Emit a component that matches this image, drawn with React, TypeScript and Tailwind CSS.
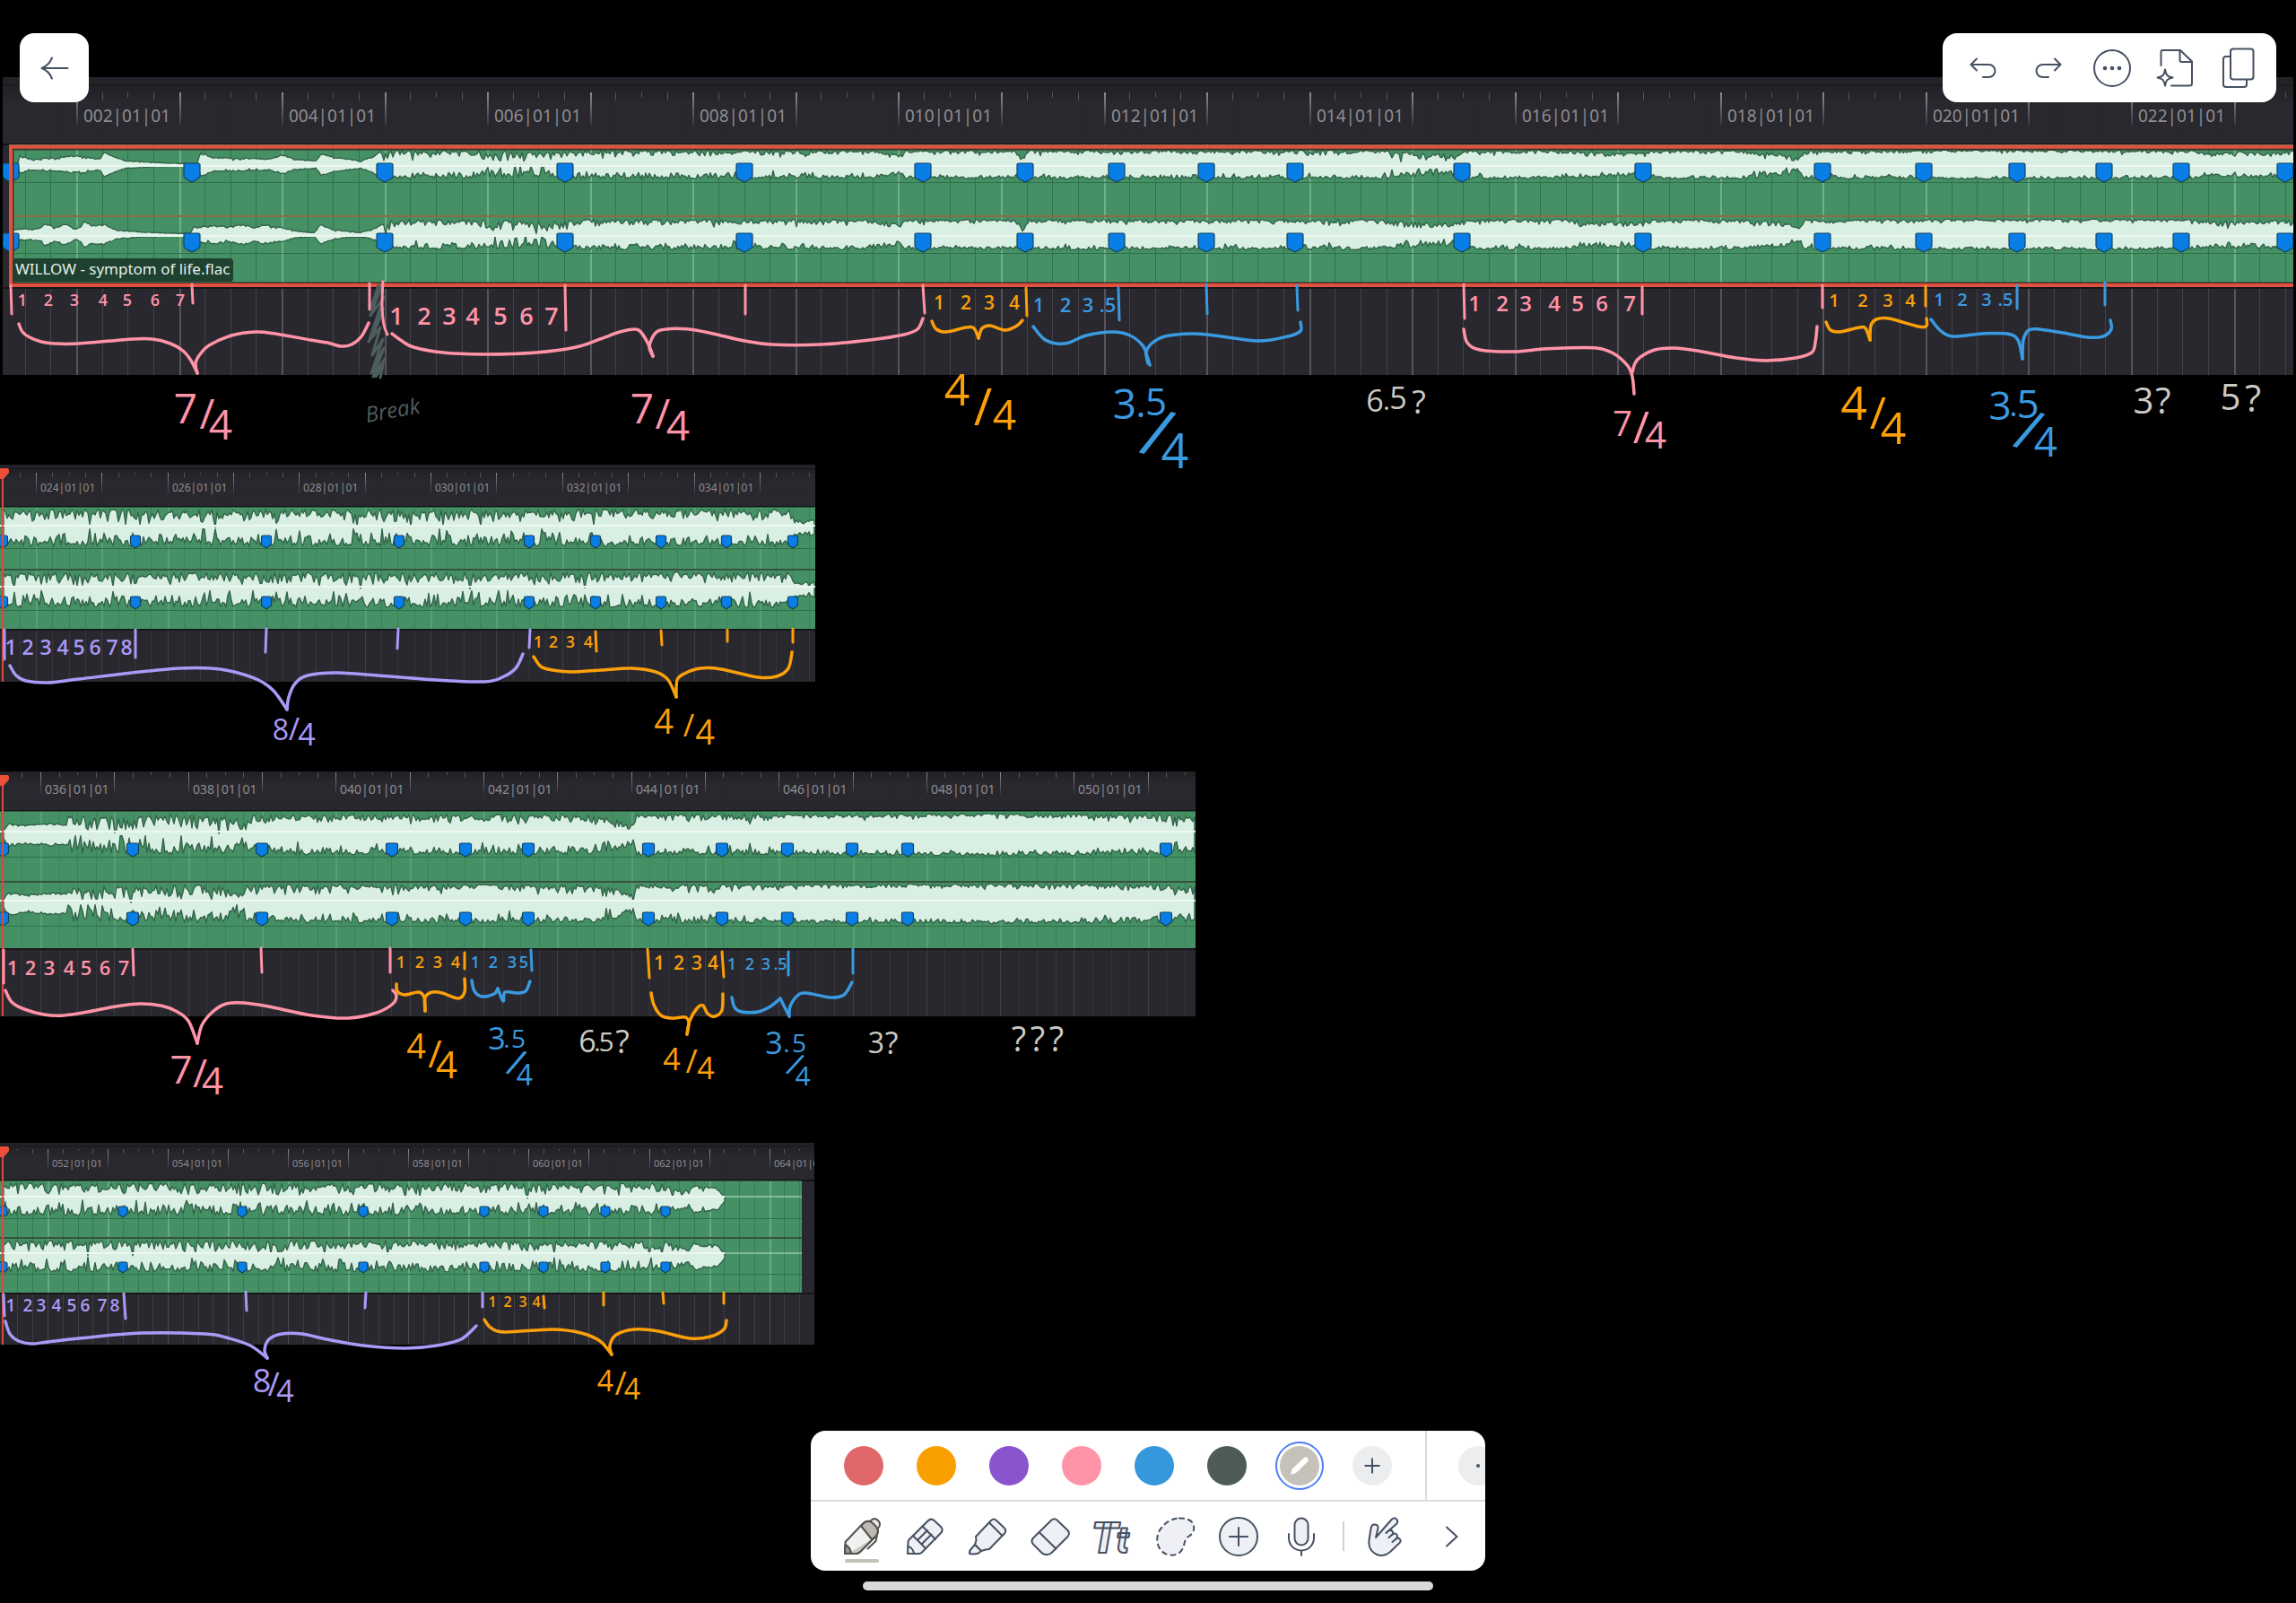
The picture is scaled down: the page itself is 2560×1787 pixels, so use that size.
import React from "react";

type Pt = [number, number];
type Key = [number, number, number];

interface Channel {
  top: number;
  bottom: number;
  axis: number;
  rule: number;
  markerY: number;
}

interface StripData {
  id: string;
  left: number;
  firstBar: number;
  firstX: number;
  barWidth: number;
  bars: number;
  labelSize: number;
  labelDx: number;
  labelY: number;
  tickTop: number;
  majorLen: number;
  minorLen: number;
  rulerHeight: number;
  clipHeight: number;
  laneHeight: number;
  clipEnd: number;
  waveEnd: number;
  split: number;
  splitColor: string;
  channels: Channel[];
  markers: number[];
  markerW: number;
  markerH: number;
  keys: Key[][];
  seed: number;
  gridAlpha: number;
}

function random(seed: number) {
  let s = seed;
  return () => {
    s = (s * 1664525 + 1013904223) % 4294967296;
    return s / 4294967296;
  };
}

function levelAt(keys: Key[], x: number): [number, number] {
  for (let i = 1; i < keys.length; i++) {
    if (x <= keys[i][0]) {
      const a = keys[i - 1];
      const b = keys[i];
      const t = Math.max(0, (x - a[0]) / (b[0] - a[0]));
      return [a[1] + (b[1] - a[1]) * t, a[2] + (b[2] - a[2]) * t];
    }
  }
  const last = keys[keys.length - 1];
  return [last[1], last[2]];
}

function wavePath(keys: Key[], ch: Channel, end: number, seed: number) {
  const rnd = random(seed);
  const half = (ch.bottom - ch.top) / 2;
  const upper: string[] = [];
  const lower: string[] = [];
  for (let x = keys[0][0]; x <= end; x += 2) {
    const [base, jitter] = levelAt(keys, x);
    const common = Math.pow(rnd(), 3);
    const a = Math.min(0.95, base + jitter * (common * 0.5 + Math.pow(rnd(), 2.5) * 0.65));
    const b = Math.min(0.95, base + jitter * (common * 0.5 + Math.pow(rnd(), 2.5) * 0.75));
    upper.push(`${x} ${(ch.top + a * half).toFixed(1)}`);
    lower.push(`${x} ${(ch.bottom - b * half).toFixed(1)}`);
  }
  return `M${upper.join("L")}L${lower.reverse().join("L")}Z`;
}

function smooth(points: Pt[]) {
  let d = `M${points[0][0]} ${points[0][1]}`;
  for (let i = 0; i < points.length - 1; i++) {
    const p0 = points[Math.max(0, i - 1)];
    const p1 = points[i];
    const p2 = points[i + 1];
    const p3 = points[Math.min(points.length - 1, i + 2)];
    const c1 = [p1[0] + (p2[0] - p0[0]) / 6, p1[1] + (p2[1] - p0[1]) / 6];
    const c2 = [p2[0] - (p3[0] - p1[0]) / 6, p2[1] - (p3[1] - p1[1]) / 6];
    d += `C${c1[0].toFixed(1)} ${c1[1].toFixed(1)} ${c2[0].toFixed(1)} ${c2[1].toFixed(1)} ${p2[0]} ${p2[1]}`;
  }
  return d;
}

const LOUD_A: Key[] = [
  [430, 0.1, 0.9], [442, 0.05, 0.6], [540, 0.05, 0.6], [550, 0.1, 1], [630, 0.15, 1], [640, 0.03, 0.6],
  [860, 0.03, 0.5], [970, 0.03, 0.4], [1003, 0.32, 0.4], [1010, 0.03, 0.35], [1132, 0.04, 0.3], [1141, 0.6, 0.4],
  [1146, 0.02, 0.35], [1540, 0.02, 0.4], [1555, 0.1, 0.7], [1618, 0.3, 0.6], [1632, 0.02, 0.4], [1740, 0.02, 0.3],
  [1760, 0.08, 0.5], [1828, 0.22, 0.4], [1845, 0.02, 0.3], [1940, 0.02, 0.3], [1965, 0.12, 0.5], [1990, 0.2, 0.5],
  [2005, 0.6, 0.3], [2012, 0.02, 0.35], [2100, 0.02, 0.35], [2180, 0, 0.22], [2440, 0.02, 0.3], [2470, 0.15, 0.4], [2560, 0.05, 0.5],
];

const STRIPS: StripData[] = [
  {
    id: "a", left: 3, firstBar: 2, firstX: 85, barWidth: 114.55, bars: 22,
    labelSize: 19, labelDx: 8, labelY: 41, tickTop: 8, majorLen: 37, minorLen: 9,
    rulerHeight: 65, clipHeight: 159, laneHeight: 98, clipEnd: 2560, waveEnd: 2560,
    split: 79, splitColor: "#8a6a49",
    channels: [
      { top: 6, bottom: 39, axis: 23, rule: 42, markerY: 21 },
      { top: 83, bottom: 118, axis: 101, rule: 121, markerY: 99 },
    ],
    markers: [12, 214, 429, 630, 830, 1029, 1143, 1245, 1345, 1444, 1630, 1832, 2032, 2145, 2249, 2346, 2432, 2548],
    markerW: 18, markerH: 21, seed: 7, gridAlpha: 1,
    keys: [
      [
        [14, 0.93, 0], [20, 0.93, 0], [22, 0.35, 0.2], [35, 0.6, 0.2], [60, 0.5, 0.2], [95, 0.32, 0.25], [105, 0.6, 0.1],
        [113, 0.6, 0], [115, 0.15, 0], [125, 0.4, 0.1], [140, 0.72, 0.08], [180, 0.86, 0.05], [212, 0.94, 0], [220, 0.9, 0],
        [223, 0.15, 0.2], [238, 0.52, 0.1], [262, 0.5, 0.25], [300, 0.62, 0.1], [315, 0.28, 0.15], [327, 0.6, 0.1],
        [352, 0.75, 0.05], [358, 0.25, 0.1], [372, 0.48, 0.1], [402, 0.72, 0.1], [414, 0.5, 0.1], [424, 0.1, 0.1],
        ...LOUD_A,
      ],
      [
        [14, 0.7, 0.1], [27, 0.6, 0.15], [45, 0.6, 0.1], [50, 0.25, 0.1], [60, 0.5, 0.15], [66, 0.5, 0.1], [71, 0.28, 0.1],
        [84, 0.6, 0.1], [90, 0.5, 0.1], [94, 0.15, 0.1], [102, 0.4, 0.1], [116, 0.32, 0.15], [130, 0.7, 0.08], [165, 0.85, 0.05],
        [200, 0.93, 0], [212, 0.93, 0], [216, 0.5, 0.15], [240, 0.38, 0.2], [255, 0.5, 0.15], [272, 0.28, 0.15], [284, 0.55, 0.1],
        [294, 0.35, 0.2], [312, 0.5, 0.15], [330, 0.76, 0.08], [350, 0.86, 0.05], [357, 0.35, 0.1], [372, 0.68, 0.1],
        [400, 0.86, 0.05], [414, 0.7, 0.1], [425, 0.3, 0.2],
        ...LOUD_A,
      ],
    ],
  },
  {
    id: "b", left: 0, firstBar: 24, firstX: 40, barWidth: 73.35, bars: 12,
    labelSize: 12, labelDx: 5, labelY: 25, tickTop: 4, majorLen: 23, minorLen: 5,
    rulerHeight: 41, clipHeight: 136, laneHeight: 59, clipEnd: 909, waveEnd: 909,
    split: 69, splitColor: "#35523f",
    channels: [
      { top: 2, bottom: 45, axis: 20, rule: 46, markerY: 32 },
      { top: 72, bottom: 113, axis: 88, rule: 115, markerY: 100 },
    ],
    markers: [3, 151, 297, 445, 590, 664, 737, 810, 884],
    markerW: 11, markerH: 14, seed: 21, gridAlpha: 0.5,
    keys: [[[4, 0.05, 0.9], [400, 0.05, 0.85], [560, 0.04, 0.9], [660, 0.06, 0.9], [700, 0.03, 0.6], [860, 0.04, 0.7], [880, 0.05, 0.6], [886, 0.6, 0.2], [909, 0.55, 0.25]]],
  },
  {
    id: "c", left: 0, firstBar: 36, firstX: 45, barWidth: 82.32, bars: 16,
    labelSize: 14, labelDx: 5, labelY: 25, tickTop: 1, majorLen: 24, minorLen: 6,
    rulerHeight: 43, clipHeight: 153, laneHeight: 76, clipEnd: 1333, waveEnd: 1333,
    split: 78, splitColor: "#35523f",
    channels: [
      { top: 3, bottom: 50, axis: 22, rule: 51, markerY: 36 },
      { top: 81, bottom: 126, axis: 99, rule: 128, markerY: 113 },
    ],
    markers: [3, 148, 292, 437, 519, 589, 723, 805, 878, 950, 1012, 1300],
    markerW: 13, markerH: 15, seed: 33, gridAlpha: 0.5,
    keys: [[[4, 0.8, 0.1], [9, 0.4, 0.2], [28, 0.55, 0.1], [60, 0.45, 0.15], [74, 0.5, 0.1], [76, 0.1, 1], [145, 0.15, 1], [190, 0.05, 0.9], [264, 0.08, 0.9], [270, 0.6, 0.3], [275, 0.1, 0.7], [300, 0.04, 0.5], [620, 0.04, 0.5], [660, 0.05, 0.5], [680, 0.2, 0.6], [706, 0.5, 0.4], [710, 0.03, 0.4], [860, 0.02, 0.5], [900, 0.02, 0.3], [1100, 0, 0.25], [1270, 0.02, 0.4], [1333, 0.12, 0.7]]],
  },
  {
    id: "d", left: 0, firstBar: 52, firstX: 53, barWidth: 67.05, bars: 13,
    labelSize: 11, labelDx: 5, labelY: 23, tickTop: 3, majorLen: 22, minorLen: 5,
    rulerHeight: 37, clipHeight: 125, laneHeight: 58, clipEnd: 894, waveEnd: 808,
    split: 63, splitColor: "#35523f",
    channels: [
      { top: 2, bottom: 40, axis: 17, rule: 42, markerY: 29 },
      { top: 66, bottom: 103, axis: 80, rule: 104, markerY: 91 },
    ],
    markers: [3, 137, 270, 405, 540, 606, 675, 742],
    markerW: 10, markerH: 12, seed: 58, gridAlpha: 0.8,
    keys: [[[4, 0.05, 0.8], [300, 0.05, 0.85], [570, 0.05, 0.7], [590, 0.1, 0.9], [640, 0.05, 0.7], [740, 0.08, 0.8], [768, 0.5, 0.3], [774, 0.15, 0.2], [785, 0.25, 0.3], [800, 0.3, 0.2], [808, 0.9, 0]]],
  },
];

function beats(s: StripData) {
  const out: { x: number; beat: number }[] = [];
  for (let i = -4; i < s.bars * 4 + 4; i++) {
    const x = s.firstX + (i * s.barWidth) / 4;
    if (x > s.left + 8) out.push({ x: Math.round(x), beat: ((i % 4) + 4) % 4 });
  }
  return out;
}

function Ruler({ s }: { s: StripData }) {
  const fade = `fade-${s.id}`;
  return (
    <svg className="block w-full" height={s.rulerHeight} aria-label="Bar ruler">
      <defs>
        <linearGradient id={fade} x1="0" x2="0" y1="0" y2="1">
          <stop offset="0" stopColor="#8c8b90" />
          <stop offset="1" stopColor="#8c8b90" stopOpacity="0.15" />
        </linearGradient>
      </defs>
      <g transform={`translate(${-s.left} 0)`}>
        {beats(s).map(({ x, beat }) => (
          <rect
            key={x}
            x={x}
            y={s.tickTop}
            width={beat === 0 && s.id === "a" ? 2 : 1}
            height={beat === 0 ? s.majorLen : beat === 2 ? s.minorLen - 3 : s.minorLen}
            fill={beat === 0 ? `url(#${fade})` : "#55545a"}
          />
        ))}
        {Array.from({ length: Math.ceil(s.bars / 2) }, (_, i) => (
          <text
            key={i}
            x={Math.round(s.firstX + i * 2 * s.barWidth) + s.labelDx}
            y={s.labelY}
            fontSize={s.labelSize}
            fill="#8e8d91"
          >
            {`${String(s.firstBar + i * 2).padStart(3, "0")}|01|01`}
          </text>
        ))}
      </g>
    </svg>
  );
}

function Clip({ s }: { s: StripData }) {
  const selected = s.id === "a";
  const start = selected ? 10 : 0;
  const w = s.markerW;
  const h = s.markerH;
  const waves = s.channels.map((ch, i) => wavePath(s.keys[i] ?? s.keys[0], ch, s.waveEnd, s.seed + i * 91));
  return (
    <svg className="block w-full" height={s.clipHeight} aria-label="Audio clip waveform">
      <g transform={`translate(${-s.left} 0)`}>
        <rect x={start} width={s.clipEnd - start} height={s.clipHeight} fill="#459165" />
        {beats(s).filter((b) => b.x < s.clipEnd).map(({ x, beat }) => (
          <rect
            key={x}
            x={x}
            width={beat === 0 ? 2 : 1}
            height={s.clipHeight}
            fill={beat === 0 ? "#bfe6cf" : "#1d5637"}
            opacity={(beat === 0 ? 0.36 : 0.5) * s.gridAlpha}
          />
        ))}
        {s.channels.map((ch, i) => (
          <g key={i}>
            <rect x={start} y={ch.rule} width={s.clipEnd - start} height="1" fill="#2f6e4b" />
            {s.waveEnd < s.clipEnd && (
              <rect x={start} y={ch.axis} width={s.clipEnd - start} height="2" fill="#a9d6bb" opacity="0.6" />
            )}
            <path d={waves[i]} fill="#daefe3" stroke="#336349" strokeWidth="1.4" strokeLinejoin="round" />
            <rect x={start} y={ch.axis} width={s.waveEnd - start} height="2" fill="#edf8f1" />
          </g>
        ))}
        <rect x={start} y={s.split} width={s.clipEnd - start} height="2" fill={s.splitColor} />
        {s.channels.map((ch, i) =>
          s.markers.map((m) => (
            <path
              key={`${i}-${m}`}
              transform={`translate(${m - w / 2} ${ch.markerY})`}
              d={`M2 0H${w - 2}Q${w} 0 ${w} 2V${h * 0.68}Q${w} ${h * 0.76} ${w - 2} ${h * 0.82}L${w / 2} ${h}L2 ${h * 0.82}Q0 ${h * 0.76} 0 ${h * 0.68}V2Q0 0 2 0Z`}
              fill="#087ee6"
              stroke="#14435f"
              strokeWidth="1.2"
            />
          )),
        )}
        {selected ? (
          <>
            <path d="M2600 5.5H14.5V154.5H2600" fill="none" stroke="#4a2f2a" strokeWidth="2" />
            <path d="M2600 2.5H12V157H2600" fill="none" stroke="#e2513f" strokeWidth="4" />
          </>
        ) : (
          <rect x="0" width={s.clipEnd} height="1" fill="#2a5d42" />
        )}
      </g>
    </svg>
  );
}

function Lane({ s }: { s: StripData }) {
  return (
    <svg className="block w-full" height={s.laneHeight} aria-hidden="true">
      <g transform={`translate(${-s.left} 0)`}>
        {beats(s).map(({ x, beat }) => (
          <rect
            key={x}
            x={x}
            width={beat === 0 && s.id === "a" ? 2 : 1}
            height={s.laneHeight}
            fill={beat === 0 ? "#55545a" : "#434248"}
            opacity={s.gridAlpha}
          />
        ))}
        <rect x={s.left} width="2600" height="2" fill="#17161a" />
      </g>
    </svg>
  );
}

function Playhead() {
  return (
    <svg className="absolute top-0 left-0 h-full w-3" aria-hidden="true">
      <rect x="2" y="6" width="2" height="400" fill="#d94c3d" />
      <path d="M0 4H8Q10 4 10 6V9L4 16H0Z" fill="#ee4f3b" />
    </svg>
  );
}

function Strip({ s, className, band }: { s: StripData; className: string; band: string }) {
  return (
    <section className={`relative overflow-hidden bg-[#29282e] ${className}`}>
      <div className={`bg-[#232228] ${band}`} />
      <div className="-mb-px border-b-2 border-[#131216] bg-gradient-to-b from-[#212025] to-[#29282e] to-30%">
        <Ruler s={s} />
      </div>
      <div className="relative">
        <Clip s={s} />
        {s.id === "a" && (
          <span className="absolute bottom-[6px] left-[11px] rounded-sm bg-[#1e4130] pr-1 pb-[2px] pl-[3px] text-[17px] leading-6 whitespace-nowrap text-[#e6efe9]">
            WILLOW - symptom of life.flac
          </span>
        )}
      </div>
      <Lane s={s} />
      {s.id !== "a" && <Playhead />}
    </section>
  );
}

const PINK = "#ff93a8";
const ORANGE = "#fb9f0a";
const BLUE = "#3a9ae0";
const PURPLE = "#ab99f7";
const GREY = "#cdcac3";

const STROKES: { color: string; lines: Pt[][]; braces: Pt[][] }[] = [
  {
    color: PINK,
    lines: [
      [[12, 318], [13, 350]], [[214, 317], [215, 338]], [[412, 316], [412, 345]], [[427, 314], [426, 340], [428, 362], [432, 373]],
      [[630, 318], [631, 368]], [[831, 318], [831, 350]], [[1029, 318], [1031, 349]], [[1632, 317], [1633, 355]],
      [[1831, 320], [1831, 350]], [[2032, 318], [2032, 343]],
      [[4, 1059], [4, 1096]], [[148, 1058], [149, 1087]], [[291, 1057], [292, 1084]], [[435, 1057], [435, 1084]],
    ],
    braces: [
      [[21, 361], [25, 370], [33, 376], [46, 381], [60, 383], [88, 383], [148, 378], [170, 378], [190, 383], [204, 391], [213, 402], [220, 416]],
      [[220, 416], [218, 405], [223, 395], [233, 385], [258, 374], [285, 370], [307, 372], [346, 379], [365, 382], [380, 386], [392, 384], [403, 375], [411, 360]],
      [[437, 372], [448, 380], [461, 387], [494, 393], [543, 395], [598, 393], [642, 387], [669, 378], [691, 370], [708, 367], [716, 372], [724, 386], [728, 397]],
      [[728, 397], [724, 386], [731, 371], [743, 367], [768, 367], [795, 372], [830, 380], [860, 384], [915, 384], [970, 379], [1008, 373], [1023, 367], [1029, 355]],
      [[1632, 367], [1636, 382], [1650, 390], [1688, 392], [1720, 389], [1744, 388], [1780, 388], [1799, 394], [1815, 408], [1820, 420], [1822, 439]],
      [[1820, 415], [1823, 405], [1829, 398], [1845, 390], [1867, 388], [1892, 391], [1936, 399], [1969, 402], [2002, 399], [2020, 393], [2024, 382], [2026, 364]],
      [[6, 1104], [13, 1117], [27, 1125], [49, 1131], [71, 1132], [98, 1128], [129, 1122], [156, 1119], [179, 1121], [196, 1127], [210, 1138], [220, 1163]],
      [[220, 1163], [225, 1143], [237, 1128], [252, 1119], [272, 1118], [299, 1122], [348, 1132], [388, 1135], [420, 1129], [438, 1119], [442, 1110], [438, 1104]],
    ],
  },
  {
    color: ORANGE,
    lines: [
      [[1144, 321], [1145, 352]], [[2147, 319], [2147, 341]],
      [[664, 704], [665, 726]], [[737, 703], [738, 719]], [[811, 702], [811, 715]], [[884, 701], [884, 716]],
      [[518, 1062], [518, 1080]], [[722, 1058], [724, 1090]], [[805, 1061], [807, 1089]],
      [[606, 1445], [607, 1458]], [[673, 1441], [673, 1455]], [[739, 1441], [740, 1453]], [[807, 1441], [807, 1453]],
    ],
    braces: [
      [[1039, 358], [1044, 367], [1055, 370], [1077, 365], [1086, 366], [1091, 377]],
      [[1091, 377], [1095, 366], [1104, 363], [1121, 368], [1134, 363], [1140, 357]],
      [[2036, 359], [2041, 368], [2051, 370], [2073, 365], [2080, 366], [2085, 379]],
      [[2085, 379], [2086, 363], [2092, 356], [2106, 355], [2139, 364], [2148, 363], [2148, 355]],
      [[595, 732], [603, 743], [616, 747], [637, 749], [670, 747], [704, 745], [731, 749], [745, 758], [754, 777]],
      [[754, 777], [755, 758], [763, 751], [781, 745], [804, 746], [845, 755], [866, 754], [879, 745], [883, 727]],
      [[442, 1097], [443, 1105], [451, 1109], [467, 1106], [473, 1112], [474, 1127]],
      [[474, 1127], [474, 1112], [482, 1106], [493, 1107], [511, 1113], [518, 1106], [518, 1091]],
      [[726, 1107], [729, 1120], [737, 1132], [749, 1135], [764, 1134], [768, 1140], [766, 1153]],
      [[766, 1153], [769, 1138], [778, 1123], [784, 1121], [789, 1130], [797, 1133], [805, 1126], [806, 1108]],
      [[540, 1471], [547, 1480], [563, 1485], [616, 1482], [648, 1486], [669, 1495], [682, 1510]],
      [[682, 1510], [680, 1500], [687, 1488], [707, 1482], [734, 1484], [769, 1492], [792, 1490], [807, 1482], [810, 1472]],
    ],
  },
  {
    color: BLUE,
    lines: [
      [[1247, 321], [1248, 357]], [[1345, 317], [1346, 350]], [[1446, 318], [1447, 346]], [[2249, 318], [2249, 344]], [[2347, 315], [2347, 340]],
      [[592, 1059], [593, 1082]], [[879, 1061], [879, 1087]], [[951, 1058], [951, 1085]],
    ],
    braces: [
      [[1152, 364], [1164, 378], [1178, 383], [1192, 382], [1211, 374], [1241, 370], [1260, 374], [1274, 385], [1279, 397], [1282, 407]],
      [[1280, 405], [1278, 393], [1284, 383], [1299, 375], [1329, 372], [1354, 374], [1403, 380], [1436, 375], [1450, 369], [1450, 359]],
      [[2153, 356], [2163, 368], [2177, 375], [2210, 372], [2238, 372], [2250, 379], [2255, 400]],
      [[2255, 400], [2256, 379], [2262, 368], [2273, 367], [2300, 371], [2328, 376], [2345, 375], [2354, 367], [2353, 357]],
      [[526, 1093], [529, 1105], [538, 1111], [551, 1108], [555, 1102]],
      [[555, 1102], [561, 1116], [563, 1106], [576, 1107], [586, 1105], [591, 1094]],
      [[816, 1112], [819, 1123], [827, 1128], [845, 1128], [859, 1122], [870, 1113]],
      [[870, 1113], [876, 1125], [880, 1133]],
      [[880, 1133], [881, 1122], [889, 1110], [899, 1107], [926, 1112], [941, 1109], [950, 1095]],
    ],
  },
  {
    color: PURPLE,
    lines: [
      [[5, 702], [5, 735]], [[151, 702], [151, 733]], [[297, 701], [296, 727]], [[444, 701], [443, 723]], [[591, 702], [590, 722]],
      [[4, 1443], [5, 1467]], [[138, 1442], [140, 1470]], [[274, 1440], [275, 1461]], [[408, 1441], [407, 1458]], [[538, 1441], [538, 1457]],
    ],
    braces: [
      [[11, 742], [18, 753], [29, 759], [53, 761], [88, 757], [147, 750], [200, 745], [235, 745], [261, 749], [288, 758], [305, 770], [320, 791]],
      [[320, 791], [322, 777], [329, 762], [343, 753], [376, 750], [434, 754], [487, 758], [540, 760], [560, 755], [575, 745], [583, 729]],
      [[6, 1473], [11, 1487], [21, 1495], [35, 1498], [53, 1496], [88, 1492], [158, 1486], [229, 1487], [252, 1491], [279, 1500], [298, 1514]],
      [[298, 1514], [295, 1505], [300, 1493], [314, 1487], [337, 1487], [364, 1493], [405, 1500], [452, 1503], [487, 1500], [514, 1493], [531, 1478]],
    ],
  },
];

type Row = { color: string; y: number; size: number; text: string[]; xs: number[] };

const ROWS: Row[] = [
  { color: PINK, y: 341, size: 18, text: ["1", "2", "3", "4", "5", "6", "7"], xs: [25, 54, 83, 115, 142, 173, 201] },
  { color: PINK, y: 362, size: 27, text: ["1", "2", "3", "4", "5", "6", "7"], xs: [442, 473, 501, 527, 558, 587, 615] },
  { color: ORANGE, y: 345, size: 21, text: ["1", "2", "3", "4"], xs: [1047, 1077, 1103, 1131] },
  { color: BLUE, y: 348, size: 22, text: ["1", "2", "3", ".5"], xs: [1158, 1188, 1213, 1235] },
  { color: PINK, y: 347, size: 24, text: ["1", "2", "3", "4", "5", "6", "7"], xs: [1644, 1675, 1701, 1733, 1759, 1786, 1817] },
  { color: ORANGE, y: 342, size: 20, text: ["1", "2", "3", "4"], xs: [2045, 2077, 2105, 2130] },
  { color: BLUE, y: 341, size: 20, text: ["1", "2", "3", ".5"], xs: [2162, 2188, 2215, 2236] },
  { color: PURPLE, y: 730, size: 23, text: ["1", "2", "3", "4", "5", "6", "7", "8"], xs: [12, 31, 51, 70, 88, 106, 125, 141] },
  { color: ORANGE, y: 722, size: 18, text: ["1", "2", "3", "4"], xs: [600, 617, 636, 656] },
  { color: PINK, y: 1087, size: 22, text: ["1", "2", "3", "4", "5", "6", "7"], xs: [14, 34, 55, 77, 96, 117, 138] },
  { color: ORANGE, y: 1079, size: 18, text: ["1", "2", "3", "4"], xs: [447, 468, 488, 508] },
  { color: BLUE, y: 1079, size: 18, text: ["1", "2", "3", "5"], xs: [530, 550, 571, 584] },
  { color: ORANGE, y: 1081, size: 21, text: ["1", "2", "3", "4"], xs: [735, 757, 777, 795] },
  { color: BLUE, y: 1081, size: 18, text: ["1", "2", "3", ".5"], xs: [816, 836, 854, 870] },
  { color: PURPLE, y: 1462, size: 19, text: ["1", "2", "3", "4", "5", "6", "7", "8"], xs: [12, 31, 46, 63, 80, 95, 114, 128] },
  { color: ORANGE, y: 1457, size: 16, text: ["1", "2", "3", "4"], xs: [549, 566, 583, 598] },
];

/* glyph, centre x, baseline y, size, lean in degrees */
type Glyph = [string, number, number, number, number?];

const METERS: { color: string; glyphs: Glyph[] }[] = [
  { color: PINK, glyphs: [["7", 207, 472, 46], ["/", 231, 478, 46], ["4", 246, 490, 46]] },
  { color: PINK, glyphs: [["7", 716, 472, 46], ["/", 739, 478, 46], ["4", 756, 491, 46]] },
  { color: ORANGE, glyphs: [["4", 1067, 452, 50], ["/", 1096, 474, 56], ["4", 1120, 479, 46]] },
  { color: BLUE, glyphs: [["3", 1254, 467, 46], [".", 1272, 465, 40], ["5", 1289, 463, 42], ["/", 1283, 504, 76, 18], ["4", 1310, 522, 54]] },
  { color: GREY, glyphs: [["6", 1533, 459, 34], [".", 1546, 457, 30], ["5", 1559, 456, 34], ["?", 1582, 461, 36]] },
  { color: PINK, glyphs: [["7", 1809, 486, 38], ["/", 1830, 494, 50], ["4", 1846, 500, 42]] },
  { color: ORANGE, glyphs: [["4", 2067, 468, 52], ["/", 2094, 478, 50], ["4", 2111, 495, 50]] },
  { color: BLUE, glyphs: [["3", 2230, 468, 44], [".", 2245, 464, 34], ["5", 2261, 466, 44], ["/", 2255, 497, 64, 20], ["4", 2281, 509, 46]] },
  { color: GREY, glyphs: [["3", 2390, 461, 40], ["?", 2412, 461, 40]] },
  { color: GREY, glyphs: [["5", 2487, 457, 40], ["?", 2512, 459, 42]] },
  { color: PURPLE, glyphs: [["8", 313, 825, 32], ["/", 328, 825, 34], ["4", 342, 831, 34]] },
  { color: ORANGE, glyphs: [["4", 740, 818, 38], ["/", 768, 821, 34], ["4", 786, 830, 38]] },
  { color: PINK, glyphs: [["7", 202, 1208, 44], ["/", 223, 1212, 44], ["4", 237, 1220, 42]] },
  { color: ORANGE, glyphs: [["4", 464, 1180, 38], ["/", 485, 1190, 42], ["4", 498, 1202, 42]] },
  { color: BLUE, glyphs: [["3", 554, 1170, 34], [".", 565, 1168, 26], ["5", 578, 1168, 28], ["/", 571, 1196, 42, 20], ["4", 585, 1210, 32]] },
  { color: GREY, glyphs: [["6", 655, 1173, 34], [".", 666, 1172, 28], ["5", 676, 1172, 30], ["?", 694, 1174, 36]] },
  { color: ORANGE, glyphs: [["4", 749, 1193, 34], ["/", 771, 1196, 36], ["4", 787, 1203, 34]] },
  { color: BLUE, glyphs: [["3", 863, 1175, 34], [".", 877, 1173, 28], ["5", 891, 1173, 28], ["/", 882, 1196, 36, 22], ["4", 895, 1210, 30]] },
  { color: GREY, glyphs: [["3", 977, 1174, 32], ["?", 994, 1175, 34]] },
  { color: GREY, glyphs: [["?", 1136, 1172, 38], ["?", 1157, 1172, 38], ["?", 1178, 1172, 38]] },
  { color: PURPLE, glyphs: [["8", 292, 1552, 36], ["/", 305, 1556, 36], ["4", 318, 1563, 34]] },
  { color: ORANGE, glyphs: [["4", 675, 1551, 32], ["/", 692, 1555, 36], ["4", 705, 1560, 32]] },
];

function Ink() {
  return (
    <svg className="pointer-events-none absolute inset-0 h-full w-full font-['Open_Sans',sans-serif]" aria-label="Handwritten notes">
      <path
        d="M422 318L414 342L425 320L413 352L428 331L411 381L427 344L425 352L413 378L424 365L415 396L427 378L414 416L428 388L416 420L429 400L419 420L427 407L424 421"
        fill="none"
        stroke="#4d5c5d"
        strokeWidth="3"
        strokeLinecap="round"
        strokeLinejoin="round"
      />
      {STROKES.map(({ color, lines, braces }) => (
        <g key={color} fill="none" stroke={color} strokeLinecap="round" strokeLinejoin="round">
          {lines.map((l, i) => <path key={`l${i}`} d={smooth(l)} strokeWidth="3" />)}
          {braces.map((b, i) => <path key={`b${i}`} d={smooth(b)} strokeWidth="3.500" />)}
        </g>
      ))}
      {ROWS.map((r, i) => (
        <text key={i} y={r.y} fontSize={r.size} fill={r.color} textAnchor="middle" fontWeight="600">
          {r.text.map((t, j) => <tspan key={j} x={r.xs[j]}>{t}</tspan>)}
        </text>
      ))}
      {METERS.map((m, i) => (
        <text key={i} fill={m.color} textAnchor="middle" fontWeight="400">
          {m.glyphs.map(([t, x, y, size, lean], j) => (
            <tspan key={j} x={x} y={y} fontSize={size} rotate={lean ?? 0}>{t}</tspan>
          ))}
        </text>
      ))}
      <text x="409" y="471" fontSize="24" fill="#4f5d5e" transform="rotate(-10 409 471)" fontStyle="italic">Break</text>
    </svg>
  );
}

function Icon({ children, label }: { children: React.ReactNode; label?: string }) {
  return (
    <svg className="size-12 overflow-visible" viewBox="0 0 48 48" fill="none" stroke="#465063" strokeWidth="2" strokeLinecap="round" strokeLinejoin="round" aria-label={label}>
      {children}
    </svg>
  );
}

const TOP_ACTIONS = [
  { label: "Undo", icon: <path d="M16 13.5L9.5 20L16 26.5M10 20H29.500a7 7 0 0 1 0 14H23" /> },
  { label: "Redo", icon: <path d="M32 13.5L38.500 20L32 26.5M38 20H18.500a7 7 0 0 0 0 14H25" /> },
  {
    label: "More",
    icon: (
      <>
        <circle cx="25" cy="24" r="20" />
        <g fill="#465063" stroke="none"><circle cx="17" cy="24" r="2.3" /><circle cx="25" cy="24" r="2.3" /><circle cx="33" cy="24" r="2.3" /></g>
      </>
    ),
  },
  {
    label: "New page",
    icon: <path d="M8.5 21V6a2 2 0 0 1 2-2H30L43 16.5V41a2.5 2.5 0 0 1-2.5 2.5H20M29.5 4V15a2 2 0 0 0 2 2H43M13 25.5C14 32 15.500 33.500 21.500 34.500C15.500 35.500 14 37.500 13 43.500C12 37.500 10.500 35.500 4.500 34.500C10.500 33.500 12 32 13 25.500Z" />,
  },
  {
    label: "Pages",
    icon: (
      <>
        <rect x="15" y="2.500" width="25.500" height="34" rx="3" />
        <path d="M15 11H10a3 3 0 0 0-3 3V42a3 3 0 0 0 3 3H30a3 3 0 0 0 3-3V37" />
      </>
    ),
  },
];

const SWATCHES = [
  { label: "Red", className: "bg-[#e0686a]" },
  { label: "Orange", className: "bg-[#fa9f00]" },
  { label: "Purple", className: "bg-[#8b54cf]" },
  { label: "Pink", className: "bg-[#ff93a8]" },
  { label: "Blue", className: "bg-[#3598dc]" },
  { label: "Slate", className: "bg-[#4f5b59]" },
];

const TOOLS = [
  {
    label: "Pen",
    icon: (
      <g stroke="#53524f">
        <path d="M33 7L36 4.500Q39 3 42 6Q45 9 43.500 12.500L41 16Z" fill="#e9e8e4" />
        <path d="M5 43L5.500 30L25 9.500Q29 6 33 7Q41 12 42 18Q42 20 40 23L22 41Q20 43 17 43Z" fill="#f1f1ef" />
        <path d="M23 12L27 8Q30 6.500 33 7Q41 12 42 18Q41.500 21 39 24.500L35 27Z" fill="#bdbab2" />
        <path d="M35 27L22 40.500Q20 42.500 17 43L12 41Z" fill="#c9c7c2" stroke="none" />
        <path d="M23 12L35 27" />
        <path d="M5 43L5.500 33Q10 35 12.500 42.500Z" fill="#9b9890" />
        <path d="M40 23L22 41Q20 43 17 43H5" />
        <path d="M41 22L39.500 29L30.500 37.500" />
      </g>
    ),
  },
  {
    label: "Pencil",
    icon: (
      <g fill="#eef0f5">
        <path d="M5 43L5.500 30Q5.500 28.500 7 27L27.500 6.500Q31 3 34.500 6L42.500 13.500Q45 17 42 20L21 41.500Q19.500 43 18 43Z" />
        <path d="M21.500 12.500L36 27M11 23L25 37M16 28L27 17M20.500 32.500L31.500 21.500M5.500 35Q10.500 36 12.500 43" />
      </g>
    ),
  },
  {
    label: "Highlighter",
    icon: (
      <g fill="#eef0f5">
        <path d="M11 24L28 6Q31 3 34 6L43 14.500Q45.500 17.500 43 20.500L26 38L22 38.500L17 40L10 33L11.500 28Z" />
        <path d="M26 8.500L40.500 23M10 33L17 40L14 42.500Q8 44 4 43Q3.500 40 6 37.500Z" />
      </g>
    ),
  },
  {
    label: "Eraser",
    icon: (
      <g fill="#eef0f5">
        <path d="M25.500 5.500Q28.500 3 31.500 5.500L43.500 17Q46.500 20.500 43.500 24L26 41.500Q23.500 44 21 44H19Q16.500 44 14.500 42L5 32.500Q2 29 5 25.500Z" />
        <path d="M12 19.500L30.500 37.500" />
      </g>
    ),
  },
  {
    label: "Text",
    icon: (
      <text fill="#eef0f5" fontFamily="Roboto, sans-serif" fontWeight="900" fontStyle="italic" strokeWidth="2">
        <tspan x="0" y="42" fontSize="48">T</tspan>
        <tspan x="28" y="42" fontSize="40">t</tspan>
      </text>
    ),
  },
  {
    label: "Lasso",
    icon: (
      <path strokeDasharray="5 5" fill="#eef0f5" d="M28 3.500C36 3 43 6 44 12C45 17 43 21 38 24C32 28 35 35 29 41C24 46 14 46 8 40C2 33 2 24 6 17C11 9 18 4 28 3.500Z" />
    ),
  },
  {
    label: "Insert",
    icon: (
      <>
        <circle cx="24" cy="24" r="21" fill="#eef0f5" />
        <path d="M24 14V34M14 24H34" />
      </>
    ),
  },
  {
    label: "Record",
    icon: (
      <>
        <rect x="16.500" y="3.500" width="15" height="30" rx="7.500" fill="#eef0f5" />
        <path d="M10 21V25.500a14 14 0 0 0 28 0V21M24 39.500V45" />
      </>
    ),
  },
];

export default function App() {
  return (
    <main className="relative min-h-screen overflow-hidden bg-black font-['Noto_Sans','Open_Sans',sans-serif]">
      <div className="relative min-h-screen pt-[86px]">
        <Strip s={STRIPS[0]} className="mx-[3px]" band="h-[9px] border-b border-[#18171b]" />
        <Strip s={STRIPS[1]} className="mt-[100px] max-w-[909px]" band="h-[5px] border-b border-[#18171b]" />
        <Strip s={STRIPS[2]} className="mt-[100px] max-w-[1333px]" band="h-0" />
        <Strip s={STRIPS[3]} className="mt-[141px] max-w-[908px]" band="h-[4px] border-b border-[#18171b]" />
        <Ink />
      </div>

      <header className="absolute inset-x-0 top-0 flex items-start justify-between px-[22px] pt-[37px]">
        <button type="button" aria-label="Back" className="flex size-[77px] items-center justify-center rounded-2xl bg-white">
          <Icon><path d="M21 12.500Q17.500 21 9.500 24Q17.500 27 21 35.500M10 24H38.500" /></Icon>
        </button>
        <nav className="flex h-[77px] w-[372px] items-center rounded-2xl bg-white pr-[6px] pl-[10px]">
          {TOP_ACTIONS.map((a) => (
            <button key={a.label} type="button" aria-label={a.label} className="flex h-full flex-1 items-center justify-center">
              <Icon>{a.icon}</Icon>
            </button>
          ))}
        </nav>
      </header>

      <footer className="absolute inset-x-0 bottom-0 flex flex-col items-center gap-3 pb-[14px]">
        <div className="w-[752px] overflow-hidden rounded-2xl bg-white">
          <div className="flex h-[79px] items-center border-b-2 border-[#dcdce0] pl-[18px]">
            {SWATCHES.map((c) => (
              <button key={c.label} type="button" aria-label={c.label} className="flex w-[81px] shrink-0 justify-center">
                <span className={`size-11 rounded-full ${c.className}`} />
              </button>
            ))}
            <button type="button" aria-label="Edit colour" aria-pressed="true" className="flex w-[81px] shrink-0 justify-center">
              <span className="flex size-[54px] items-center justify-center rounded-full border-2 border-[#4f7df5]">
                <span className="flex size-11 items-center justify-center rounded-full bg-[#c5c2ba]">
                  <svg className="size-6" viewBox="0 0 24 24" fill="#fff" aria-hidden="true">
                    <path d="M2 22L3.500 16L17 3Q19 1.500 21 3.500Q22.500 5.500 21 7.500L8 20Z" />
                  </svg>
                </span>
              </span>
            </button>
            <button type="button" aria-label="Add colour" className="flex w-[81px] shrink-0 justify-center">
              <span className="flex size-11 items-center justify-center rounded-full bg-[#ecedef]">
                <svg className="size-6" viewBox="0 0 24 24" stroke="#465063" strokeWidth="2" aria-hidden="true">
                  <path d="M12 3.500V20.500M3.500 12H20.500" />
                </svg>
              </span>
            </button>
            <span className="ml-[19px] h-full w-[2px] shrink-0 bg-[#dcdce0]" />
            <button type="button" aria-label="Stroke width" className="ml-[35px] flex size-11 shrink-0 items-center justify-center rounded-full bg-[#ecedef]">
              <span className="size-1 rounded-full bg-[#465063]" />
            </button>
          </div>
          <div className="flex h-[77px] items-center pl-[22px]">
            {TOOLS.map((t, i) => (
              <button key={t.label} type="button" aria-label={t.label} aria-pressed={i === 0} className="relative flex h-full w-[70px] shrink-0 items-center justify-center">
                <Icon>{t.icon}</Icon>
                {i === 0 && <span className="absolute bottom-[9px] h-1 w-[38px] rounded-full bg-[#c5c2ba]" />}
              </button>
            ))}
            <span className="ml-[11px] h-[33px] w-[2px] shrink-0 bg-[#cfd0d4]" />
            <button type="button" aria-label="Finger drawing" className="ml-[9px] flex h-full w-[70px] shrink-0 items-center justify-center">
              <Icon>
                <path
                  fill="#eef0f5"
                  d="M15 25L32.500 5Q36 2 38 4.500Q40.500 7 38 10L28 18.500Q31 15.500 33.500 18Q35 20 33 22Q36.500 19 38.500 22Q39.500 24 37.500 26.500Q40 24.500 42 27Q43.500 29 41.500 31L31 41Q24 47 16 44Q6 39 7.500 28L9.500 15Q10.500 10 14 10.500Q18 11 17.500 14.500L15 25Z"
                />
                <path d="M28 18.500L26.500 20M33 22L29.500 25M37.500 26.500L33.500 30" />
              </Icon>
            </button>
            <button type="button" aria-label="More tools" className="ml-[6px] flex h-full w-[70px] shrink-0 items-center justify-center">
              <Icon><path d="M18 13.500L29.500 24L18 34.500" /></Icon>
            </button>
          </div>
        </div>
        <div className="h-[10px] w-[636px] rounded-full bg-[#d9d9d9]" />
      </footer>
    </main>
  );
}
